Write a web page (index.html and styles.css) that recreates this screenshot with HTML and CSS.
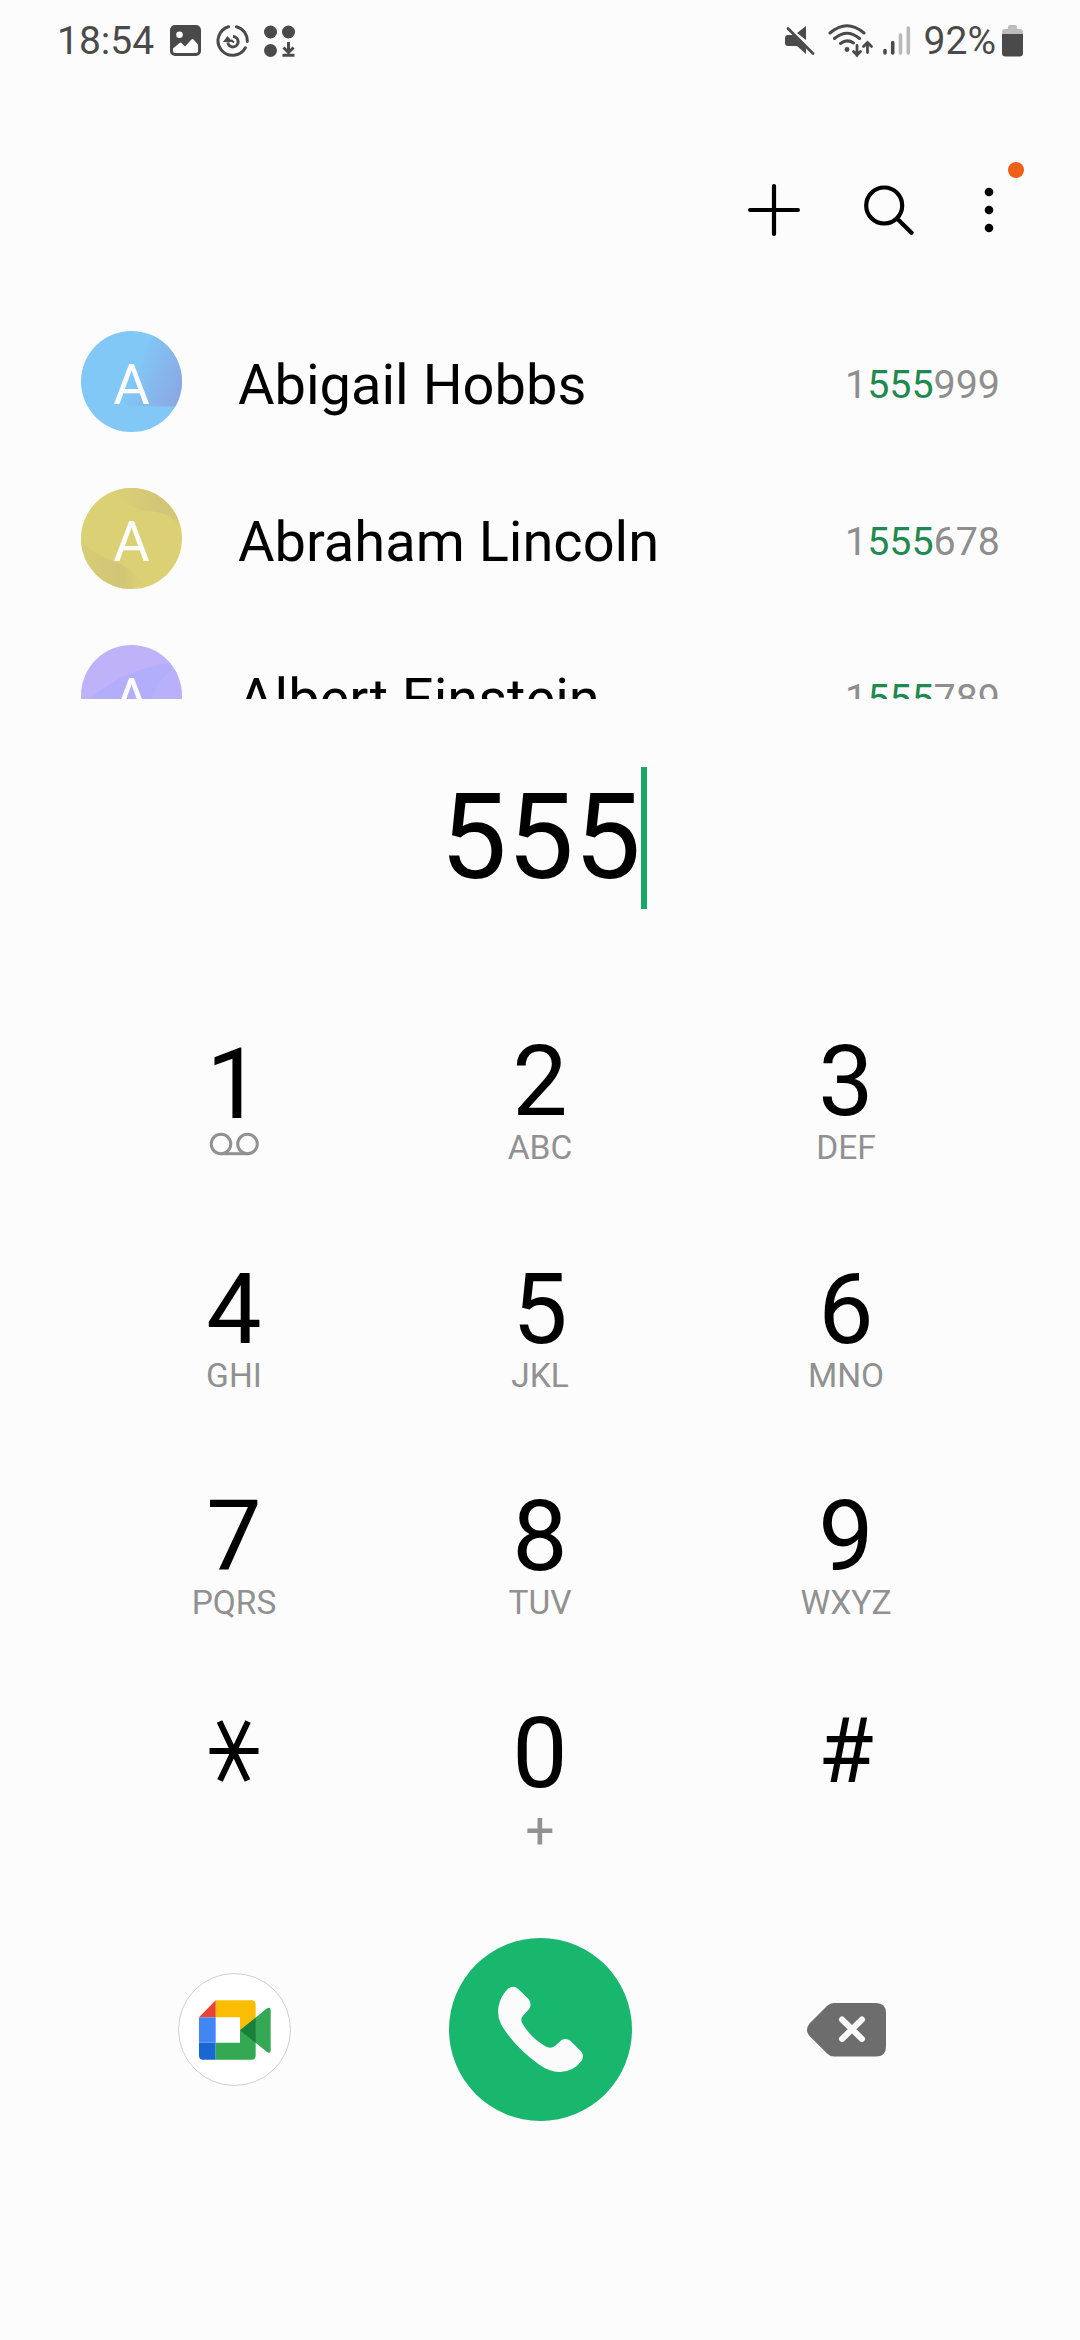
FILE: index.html
```html
<!DOCTYPE html>
<html lang="en">
  <head>
    <meta charset="utf-8">
    <title>Phone</title>
    <link rel="stylesheet" href="styles.css">
  </head>

  <body>
	<div class="status">
		<span class="status__time">18:54</span>
		<svg class="status__image" width="31" height="31" viewBox="0 0 31 31">
			<path fill="#4a4a4a" fill-rule="evenodd" d="M5 0h21a5 5 0 0 1 5 5v21a5 5 0 0 1-5 5H5a5 5 0 0 1-5-5V5a5 5 0 0 1 5-5zM9.500 6.500a3.300 3.300 0 1 0 0 6.600a3.300 3.300 0 1 0 0-6.600zM3 23.500v2.500q0 2 2 2h21q2 0 2-2v-6.500l-4.500-5q-1-1-2 0l-6.500 7l-3.500-3.500q-1-1-2 0z"/>
		</svg>
		<svg class="status__sync" width="34" height="32" viewBox="0 0 34 32" fill="none" stroke="#4a4a4a" stroke-width="3">
			<path d="M12.500 1.700A14.600 14.600 0 1 0 29.400 22.800M20.500 1.700A14.600 14.600 0 0 1 31.300 16.500" stroke-linecap="round"/>
			<path d="M17 11.500a5.200 5.200 0 1 1-5.200 6"/>
			<path d="M7 17l4.500-6l5 6z" fill="#4a4a4a" stroke="none"/>
			<path d="M15 15l3 2.500" stroke-width="2"/>
		</svg>
		<svg class="status__apps" width="32" height="32" viewBox="0 0 32 32" fill="#4a4a4a">
			<circle cx="6.500" cy="7" r="6.500"/>
			<circle cx="24.500" cy="7" r="6.500"/>
			<circle cx="6.500" cy="25.500" r="6.500"/>
			<path d="M24.500 17v10M19.500 22.500l5 5l5-5M18.500 30.300h12" fill="none" stroke="#4a4a4a" stroke-width="3"/>
		</svg>
		<div class="status__right">
			<svg width="30" height="30" viewBox="0 0 30 30" fill="#4a4a4a">
				<path d="M3 9h5l13 13v6l-9-8H3q-3 0-3-3v-5q0-3 3-3z"/>
				<path d="M21 0v14l-9-7z"/>
				<path d="M3 2.500l25 25" stroke="#4a4a4a" stroke-width="2.800" stroke-linecap="round"/>
			</svg>
			<svg class="status__wifi" width="46" height="33" viewBox="0 0 46 33" fill="none" stroke="#4a4a4a" stroke-width="3" stroke-linecap="round">
				<path d="M2 9Q19-5.500 36 9M6.500 14.500Q19 4 31.500 14.500M12.500 19.500Q19 14.500 25.500 19"/>
				<circle cx="19" cy="25.500" r="2.400" fill="#4a4a4a" stroke="none"/>
				<path d="M29 21.500v10M25.500 27.500l3.500 3.500l3.500-3.500M39.500 28.500v-9.500M35.500 22.500l4-4l4 4" stroke-width="2.800"/>
			</svg>
			<svg class="status__signal" width="28" height="29" viewBox="0 0 28 29">
				<path d="M2 24.500v2.500M9.700 16.500V27" stroke="#4a4a4a" stroke-width="3.600" stroke-linecap="round"/>
				<path d="M17.500 9V27M25.300 2V27" stroke="#b9b9b9" stroke-width="3.600" stroke-linecap="round"/>
			</svg>
			<span class="status__percent">92%</span>
			<svg class="status__battery" width="21" height="32" viewBox="0 0 21 32">
				<path fill="#bdbdbd" d="M6 4V2q0-2 2-2h5q2 0 2 2v2h3q3 0 3 3v3H0V7q0-3 3-3z"/>
				<path fill="#4a4a4a" d="M0 9h21v19q0 3.500-3.500 3.500h-14Q0 31.500 0 28z"/>
			</svg>
		</div>
	</div>

	<div class="toolbar">
		<svg width="52" height="52" viewBox="0 0 52 52" stroke="#000" stroke-width="4.200" stroke-linecap="round">
			<path d="M26 2.100v47.800M2.100 26h47.800"/>
		</svg>
		<svg width="50" height="50" viewBox="0 0 50 50" fill="none" stroke="#000" stroke-width="4.200" stroke-linecap="round">
			<circle cx="20.200" cy="20.500" r="18"/>
			<path d="M33.500 34L47.500 47.800"/>
		</svg>
		<div class="more">
			<svg width="10" height="46" viewBox="0 0 10 46">
				<circle cx="5" cy="5" r="4.300"/>
				<circle cx="5" cy="23" r="4.300"/>
				<circle cx="5" cy="41" r="4.300"/>
			</svg>
			<span class="more__badge"></span>
		</div>
	</div>

	<div class="contacts">
		<div class="contact">
			<div class="avatar avatar--blue">
				<svg class="avatar__art" viewBox="0 0 102 102">
					<linearGradient id="blue" x1="0.300" y1="0.400" x2="1" y2="0.700">
						<stop offset="0" stop-color="#81c8f6"/>
						<stop offset="1" stop-color="#8ba9e4"/>
					</linearGradient>
					<path fill="url(#blue)" d="M76 0Q66 12 62 30Q56 55 36 73Q60 77 102 76V0z"/>
				</svg>
				<span class="avatar__letter">A</span>
			</div>
			<span class="contact__name">Abigail Hobbs</span>
			<span class="contact__number">1<b>555</b>999</span>
		</div>
		<div class="contact">
			<div class="avatar avatar--yellow">
				<svg class="avatar__art" viewBox="0 0 102 102">
					<linearGradient id="yellow-top">
						<stop offset="0" stop-color="#dcd074"/>
						<stop offset="0.700" stop-color="#d2c679"/>
					</linearGradient>
					<linearGradient id="yellow-bottom">
						<stop offset="0" stop-color="#d9cd75"/>
						<stop offset="0.600" stop-color="#d1c578"/>
						<stop offset="1" stop-color="#dbcf74"/>
					</linearGradient>
					<path fill="url(#yellow-top)" d="M34 0Q42 20 66 23Q88 24 98 36V0z"/>
					<path fill="url(#yellow-bottom)" d="M0 52Q10 66 28 72Q52 80 62 96L50 102H0z"/>
				</svg>
				<span class="avatar__letter">A</span>
			</div>
			<span class="contact__name">Abraham Lincoln</span>
			<span class="contact__number">1<b>555</b>678</span>
		</div>
		<div class="contact">
			<div class="avatar avatar--purple">
				<svg class="avatar__art" viewBox="0 0 102 102">
					<path fill="#b3aefb" d="M10 54Q40 26 90 18L102 60V102H0z"/>
					<path fill="#b8b0fb" d="M72 54Q76 34 96 24L102 60z"/>
				</svg>
				<span class="avatar__letter">A</span>
			</div>
			<span class="contact__name">Albert Einstein</span>
			<span class="contact__number">1<b>555</b>789</span>
		</div>
	</div>

	<div class="input">
		<span class="input__value">555<i class="input__cursor"></i></span>
	</div>

	<div class="keypad">
		<div class="key key--voicemail">
			<span class="key__digit">1</span>
			<svg class="key__icon" width="50" height="24" viewBox="0 0 50 24" fill="none" stroke="#919191" stroke-width="3">
				<circle cx="12" cy="12" r="9.800"/>
				<circle cx="38.500" cy="12" r="9.800"/>
				<path d="M12 21.700h26.500"/>
			</svg>
		</div>
		<div class="key"><span class="key__digit">2</span><span class="key__letters">ABC</span></div>
		<div class="key"><span class="key__digit">3</span><span class="key__letters">DEF</span></div>
		<div class="key"><span class="key__digit">4</span><span class="key__letters">GHI</span></div>
		<div class="key"><span class="key__digit">5</span><span class="key__letters">JKL</span></div>
		<div class="key"><span class="key__digit">6</span><span class="key__letters">MNO</span></div>
		<div class="key"><span class="key__digit">7</span><span class="key__letters">PQRS</span></div>
		<div class="key"><span class="key__digit">8</span><span class="key__letters">TUV</span></div>
		<div class="key"><span class="key__digit">9</span><span class="key__letters">WXYZ</span></div>
		<div class="key">
			<svg class="key__star" width="50" height="62" viewBox="0 0 50 62" stroke="#000" stroke-width="6">
				<path d="M0.500 31h49M10.500 1.500l28 59M39 1.500l-28 59"/>
			</svg>
		</div>
		<div class="key"><span class="key__digit">0</span><span class="key__plus">+</span></div>
		<div class="key"><span class="key__hash">#</span></div>
	</div>

	<div class="actions">
		<div class="meet">
			<svg width="72" height="60" viewBox="0 0 216 178">
				<path fill="#fbbc04" d="M50 0H158q12 0 12 12V52L123 90V51H50z"/>
				<path fill="#ea4335" d="M50 0V51H0z"/>
				<path fill="#4285f4" d="M0 51H50V127H0z"/>
				<path fill="#1967d2" d="M0 127H50V178H12Q0 178 0 166z"/>
				<path fill="#34a853" d="M50 127H123V90L170 100V166q0 12-12 12H50z"/>
				<path fill="#34a853" d="M123 90L204 24Q215 18 215 29V150Q215 161 204 155z"/>
				<path fill="#188038" d="M123 90L170 52V127z"/>
			</svg>
		</div>
		<div class="call">
			<svg width="183" height="183" viewBox="0 0 549 549">
				<path fill="#fbfbfb" d="M174 155Q192 139 208 153L239 184Q250 199 240 214L223 232Q212 244 221 258Q247 302 292 326Q306 333 318 324L337 307Q350 298 364 308L396 340Q407 354 397 369Q374 400 334 402Q302 403 268 378Q196 326 156 259Q143 233 149 203Q155 175 174 155z"/>
			</svg>
		</div>
		<svg class="backspace" width="79" height="54" viewBox="0 0 79 54">
			<path fill="#6d6d6d" d="M27 0H69q10 0 10 10V43.500q0 10-10 10H27q-4 0-7-3L2.500 33q-5-6 0-12.500L20 3q3-3 7-3z"/>
			<path d="M35 16.500l20 19.500M55 16.500l-20 19.500" stroke="#fcfcfc" stroke-width="6" stroke-linecap="round"/>
		</svg>
	</div>
  </body>
</html>
```

FILE: styles.css
```css
* {
	box-sizing: border-box;
	margin: 0;
	padding: 0;
}

body {
	width: 1080px;
	height: 2340px;
	overflow: hidden;
	background: #fcfcfc;
	color: #000;
	font-family: Roboto, sans-serif;
}

svg {
	display: block;
	flex: none;
}

.status {
	display: flex;
	align-items: center;
	height: 81px;
	padding: 0 57px 0 57px;
	color: #4a4a4a;
	font-size: 39px;
	line-height: 80px;
}

.status__time {
	width: 98px;
}

.status__image {
	margin-left: 15px;
}

.status__sync {
	margin-left: 15px;
}

.status__apps {
	margin-left: 14px;
}

.status__right {
	display: flex;
	align-items: center;
	margin-left: auto;
}

.status__wifi {
	margin-left: 13px;
}

.status__signal {
	margin-left: 9px;
}

.status__percent {
	margin-left: 13px;
}

.status__battery {
	margin-left: 6px;
}

.toolbar {
	display: flex;
	justify-content: flex-end;
	align-items: center;
	gap: 64px;
	height: 222px;
	padding: 36px 86px 0 0;
}

.toolbar .more {
	position: relative;
	margin-left: 6px;
}

.more__badge {
	position: absolute;
	top: -25px;
	right: -30px;
	width: 16px;
	height: 16px;
	border-radius: 50%;
	background: #ee5f17;
}

.contacts {
	height: 396px;
	overflow: hidden;
}

.contact {
	display: flex;
	align-items: center;
	height: 157px;
	padding: 0 80px 0 81px;
}

.avatar {
	position: relative;
	width: 101px;
	height: 101px;
	border-radius: 50%;
	overflow: hidden;
	text-align: center;
}

.avatar--blue {
	background: #81c8f6;
}

.avatar--yellow {
	background: #dcd074;
}

.avatar--purple {
	background: #bfb2f9;
}

.avatar__art {
	position: absolute;
	inset: 0;
}

.avatar__letter {
	position: relative;
	color: #fcfcfc;
	font-size: 56px;
	line-height: 108px;
}

.contact__name {
	margin-left: 56px;
	padding-top: 6px;
	font-size: 56px;
	line-height: 66px;
}

.contact__number {
	margin-left: auto;
	padding-top: 6px;
	color: #8e8e8e;
	font-size: 39.400px;
}

.contact__number b {
	color: #1f8950;
	font-weight: 400;
}

.input {
	display: flex;
	justify-content: center;
	height: 337px;
	padding: 67px 0 0 1px;
}

.input__value {
	position: relative;
	height: 142px;
	font-size: 119.200px;
	line-height: 142px;
}

.input__cursor {
	position: absolute;
	top: 1px;
	left: 100%;
	width: 6px;
	height: 142px;
	background: #17a866;
}

.keypad {
	display: grid;
	grid-template-columns: repeat(3, 306px);
	grid-template-rows: 227.500px 227.500px 217px 230px;
	justify-content: center;
	height: 902px;
}

.key {
	display: flex;
	flex-direction: column;
	align-items: center;
}

.key__digit {
	font-size: 98.500px;
	line-height: 92px;
}

.key__letters {
	color: #919191;
	font-size: 33.500px;
	line-height: 40px;
}

.key--voicemail {
	padding-top: 3px;
}

.key__icon {
	margin-top: 1px;
}

.key__star {
	margin-top: 12px;
}

.key__plus {
	margin-top: 6px;
	color: #919191;
	font-size: 51px;
	line-height: 50px;
}

.key__hash {
	font-size: 90px;
	line-height: 88px;
}

.actions {
	display: grid;
	grid-template-columns: repeat(3, 306px);
	justify-content: center;
	justify-items: center;
	align-items: center;
	height: 183px;
}

.meet {
	display: flex;
	align-items: center;
	justify-content: center;
	width: 113px;
	height: 113px;
	padding-left: 1px;
	border: 1px solid #cfcfcf;
	border-radius: 50%;
	background: #fff;
}

.call {
	width: 183px;
	height: 183px;
	border-radius: 50%;
	background: #18b76d;
}
```
